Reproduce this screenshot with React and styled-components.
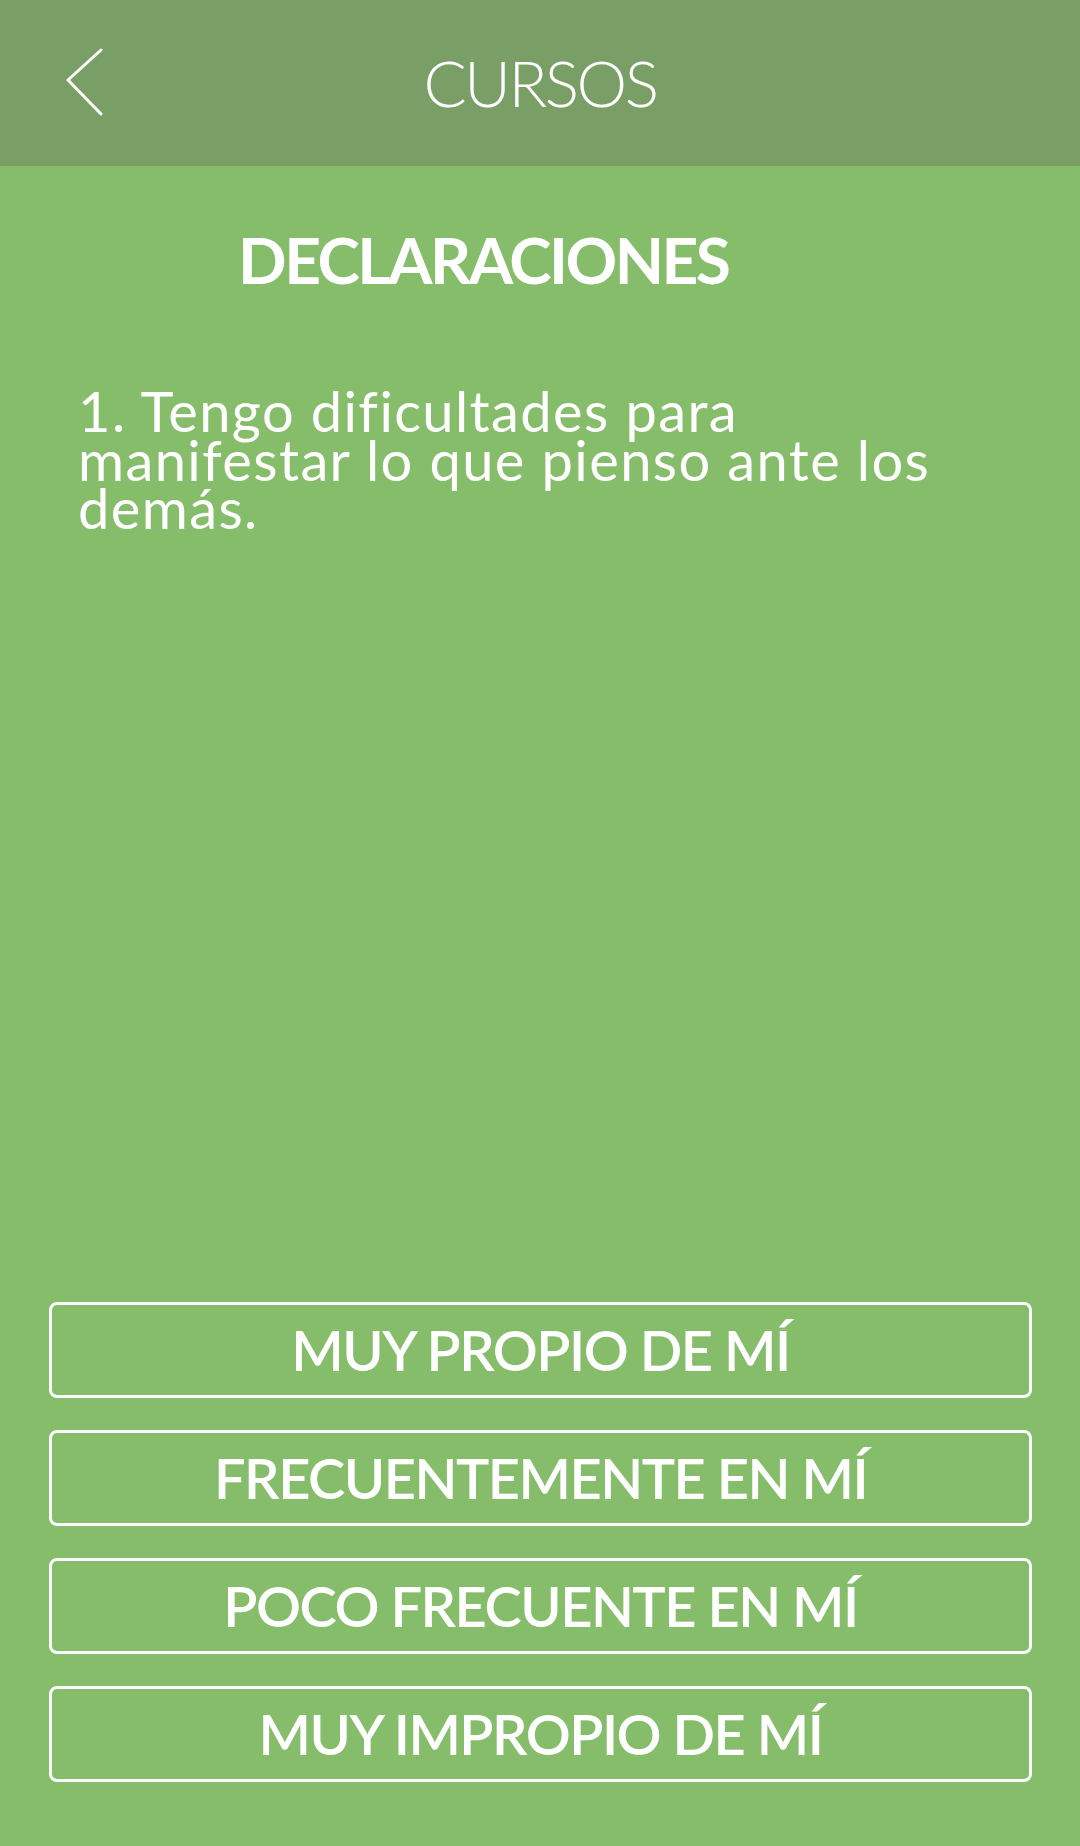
import React from "react";
import styled, { createGlobalStyle } from "styled-components";

const Global = createGlobalStyle`
  html, body { margin: 0; padding: 0; }
  body { background: #86bd6b; font-family: Lato, "Noto Sans", sans-serif; }
  * { box-sizing: border-box; }
`;

const Screen = styled.div`
  min-height: 1846px;
  display: flex;
  flex-direction: column;
  background: #86bd6b;
  color: #ffffff;
`;

const Header = styled.header`
  height: 166px;
  background: #7a9f66;
  display: grid;
  grid-template-columns: 140px 1fr 140px;
  align-items: center;
`;

const BackButton = styled.button`
  background: none;
  border: none;
  padding: 0 0 0 64px;
  height: 100%;
  display: flex;
  align-items: center;
  cursor: pointer;
`;

const HeaderTitle = styled.h1`
  margin: 0;
  text-align: center;
  font-weight: 300;
  font-size: 64px;
  letter-spacing: -2.5px;
  line-height: 1;
`;

const SectionTitle = styled.h2`
  margin: 62px 0 0;
  padding-left: 238px;
  font-weight: 700;
  font-size: 64px;
  letter-spacing: -2.5px;
  line-height: 1;
`;

const Statement = styled.p`
  margin: 95px 0 0;
  padding: 0 76px 0 78px;
  font-size: 56px;
  line-height: 48.5px;
  font-weight: 400;
  letter-spacing: 1.4px;
`;

const Spacer = styled.div`
  flex: 1;
`;

const Options = styled.div`
  display: flex;
  flex-direction: column;
  gap: 32px;
  padding: 0 48px 64px 49px;
`;

const Option = styled.button`
  height: 96px;
  border: 3px solid #ffffff;
  border-radius: 8px;
  background: transparent;
  color: #ffffff;
  font-family: Lato, "Noto Sans", sans-serif;
  font-weight: 600;
  font-size: 56px;
  letter-spacing: -1.5px;
  line-height: 1;
  display: flex;
  align-items: center;
  justify-content: center;
  cursor: pointer;
`;

const options = [
  "MUY PROPIO DE MÍ",
  "FRECUENTEMENTE EN MÍ",
  "POCO FRECUENTE EN MÍ",
  "MUY IMPROPIO DE MÍ",
];

export default function App() {
  return (
    <>
      <Global />
      <Screen>
        <Header>
          <BackButton aria-label="Volver">
            <svg width="40" height="70" viewBox="0 0 40 70" fill="none">
              <polyline
                points="37,2 4,32 37,66"
                stroke="#ffffff"
                strokeWidth="3"
                strokeLinecap="round"
                strokeLinejoin="round"
              />
            </svg>
          </BackButton>
          <HeaderTitle>CURSOS</HeaderTitle>
          <div />
        </Header>
        <SectionTitle>DECLARACIONES</SectionTitle>
        <Statement>1. Tengo dificultades para manifestar lo que pienso ante los demás.</Statement>
        <Spacer />
        <Options>
          {options.map((o) => (
            <Option key={o}>{o}</Option>
          ))}
        </Options>
      </Screen>
    </>
  );
}
